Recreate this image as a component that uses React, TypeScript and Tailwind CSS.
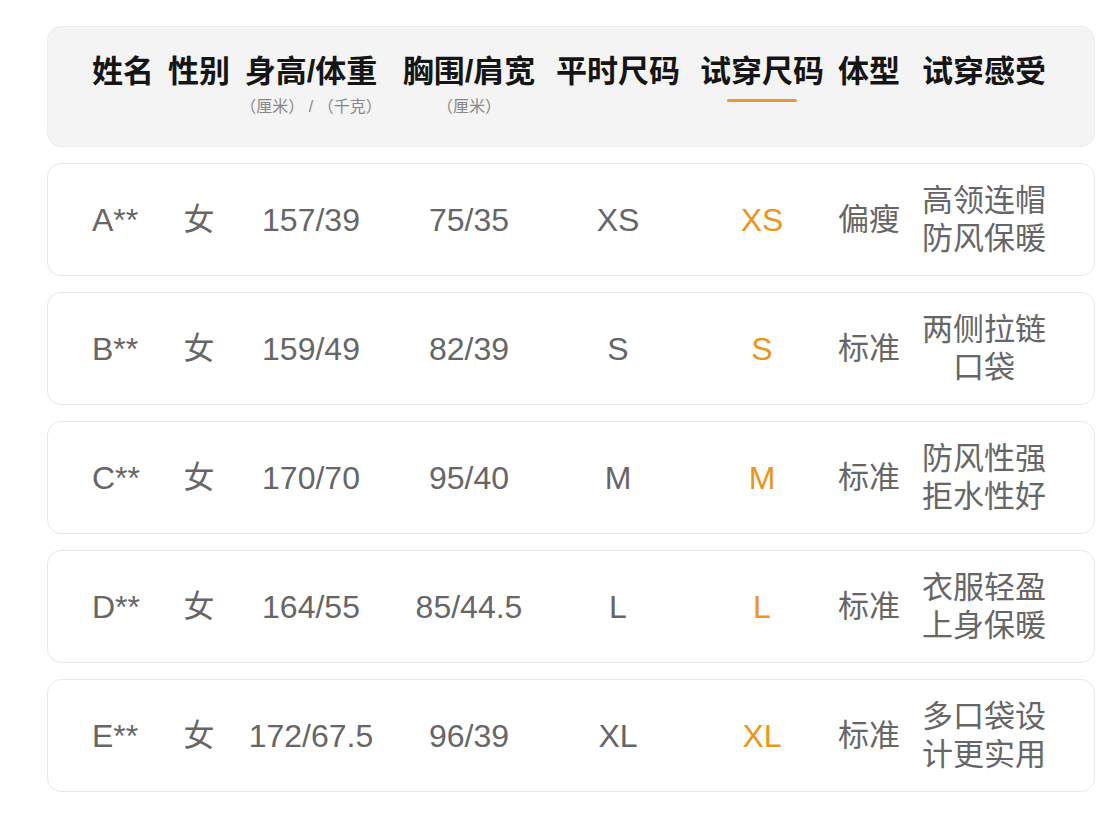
import React from "react";

const rows = [
  { name: "A**", sex: "女", hw: "157/39", cs: "75/35", usual: "XS", tried: "XS", body: "偏瘦", feel: ["高领连帽", "防风保暖"] },
  { name: "B**", sex: "女", hw: "159/49", cs: "82/39", usual: "S", tried: "S", body: "标准", feel: ["两侧拉链", "口袋"] },
  { name: "C**", sex: "女", hw: "170/70", cs: "95/40", usual: "M", tried: "M", body: "标准", feel: ["防风性强", "拒水性好"] },
  { name: "D**", sex: "女", hw: "164/55", cs: "85/44.5", usual: "L", tried: "L", body: "标准", feel: ["衣服轻盈", "上身保暖"] },
  { name: "E**", sex: "女", hw: "172/67.5", cs: "96/39", usual: "XL", tried: "XL", body: "标准", feel: ["多口袋设", "计更实用"] },
];

const grid = "grid grid-cols-[74px_66px_158px_158px_140px_148px_66px_164px] items-center";
const font = { fontFamily: '"Liberation Sans", "Noto Sans CJK SC", sans-serif' };

export default function App() {
  return (
    <div className="min-h-[815px] w-[1117px] bg-white pt-[26px] pl-[47px]" style={font}>
      <div className="flex w-[1048px] flex-col gap-4">
        <div className="h-[121px] rounded-[14px] border border-[#ececec] bg-[#f4f4f4] pl-[44px] pt-[27px]">
          <div className={grid + " items-start text-[#151515]"}>
            <div className="text-[31px] font-bold leading-[36px] whitespace-nowrap">姓名</div>
            <div className="text-center text-[31px] font-bold leading-[36px] whitespace-nowrap">性别</div>
            <div className="flex flex-col items-center">
              <div className="text-[31px] font-bold leading-[36px] whitespace-nowrap">身高/体重</div>
              <div className="mt-[7px] text-[16px] leading-[20px] text-[#888] whitespace-nowrap">（厘米） / （千克）</div>
            </div>
            <div className="flex flex-col items-center">
              <div className="text-[31px] font-bold leading-[36px] whitespace-nowrap">胸围/肩宽</div>
              <div className="mt-[7px] text-[16px] leading-[20px] text-[#888] whitespace-nowrap">（厘米）</div>
            </div>
            <div className="text-center text-[31px] font-bold leading-[36px] whitespace-nowrap">平时尺码</div>
            <div className="flex flex-col items-center">
              <div className="text-[31px] font-bold leading-[36px] whitespace-nowrap">试穿尺码</div>
              <div className="mt-[9px] h-[3px] w-[70px] rounded-full bg-[#e69a3a]" />
            </div>
            <div className="text-center text-[31px] font-bold leading-[36px] whitespace-nowrap">体型</div>
            <div className="text-center text-[31px] font-bold leading-[36px] whitespace-nowrap">试穿感受</div>
          </div>
        </div>
        {rows.map((r) => (
          <div key={r.name} className="flex h-[113px] items-center rounded-[14px] border border-[#e8e8e8] bg-white pl-[44px]">
            <div className={grid + " w-full text-[31px] text-[#666]"}>
              <div className="text-[32px] leading-[36px]">{r.name}</div>
              <div className="text-center leading-[36px]">{r.sex}</div>
              <div className="text-center text-[32px] leading-[36px] whitespace-nowrap">{r.hw}</div>
              <div className="text-center text-[32px] leading-[36px] whitespace-nowrap">{r.cs}</div>
              <div className="text-center text-[32px] leading-[36px]">{r.usual}</div>
              <div className="text-center text-[32px] leading-[36px] text-[#ea9522]">{r.tried}</div>
              <div className="text-center leading-[36px] whitespace-nowrap">{r.body}</div>
              <div className="text-center leading-[38px] whitespace-nowrap">
                <div>{r.feel[0]}</div>
                <div>{r.feel[1]}</div>
              </div>
            </div>
          </div>
        ))}
      </div>
    </div>
  );
}
